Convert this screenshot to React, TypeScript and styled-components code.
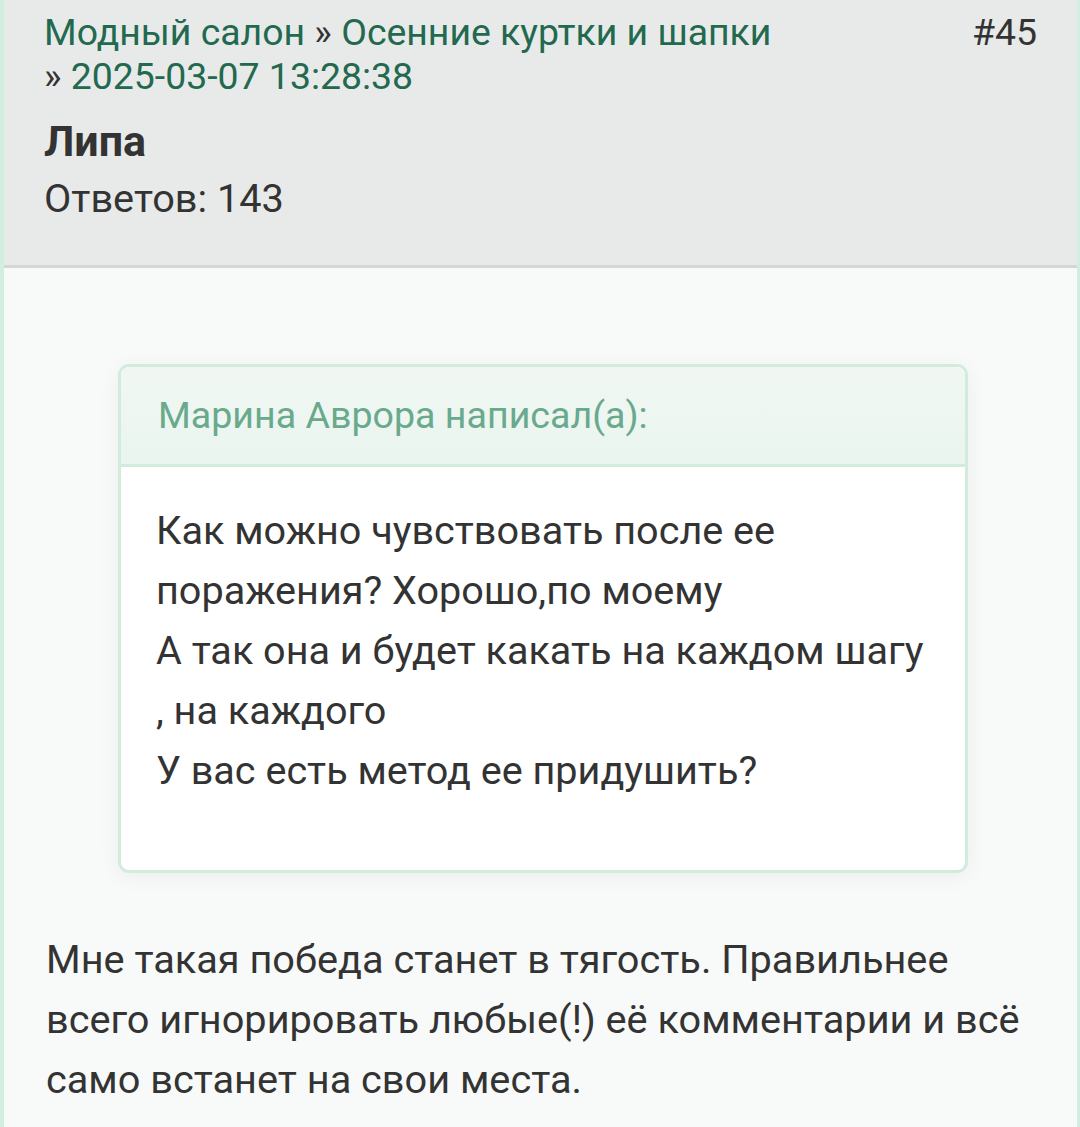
import React from "react";
import styled, { createGlobalStyle } from "styled-components";

const Global = createGlobalStyle`
  html, body { margin: 0; padding: 0; background: #f8faf9; }
  body { font-family: Roboto, "Noto Sans", "Liberation Sans", sans-serif; color: #333; }
`;

const Post = styled.article`
  border-left: 4px solid #d3eee0;
  border-right: 3px solid #d3eee0;
  background: #f8faf9;
  min-height: 1127px;
  box-sizing: border-box;
`;

const Header = styled.header`
  background: #e8eae9;
  border-bottom: 3px solid #d5d7d6;
  padding: 10px 40px 42px 40px;
  display: flex;
  flex-direction: column;
`;

const TopRow = styled.div`
  display: flex;
  justify-content: space-between;
  align-items: flex-start;
  gap: 40px;
`;

const Crumbs = styled.div`
  font-size: 37.4px;
  line-height: 44px;
  color: #333;
  max-width: 880px;
`;

const Crumb = styled.a`
  color: #22694f;
  text-decoration: none;
  white-space: nowrap;
`;

const PostNo = styled.span`
  font-size: 37.4px;
  line-height: 44px;
  color: #333;
`;

const Author = styled.div`
  margin-top: 17px;
  font-size: 43px;
  line-height: 52px;
  font-weight: 700;
  color: #333;
`;

const Replies = styled.div`
  margin-top: 8px;
  font-size: 39.7px;
  line-height: 48px;
  color: #333;
`;

const Body = styled.div`
  padding: 96px 42px 0 42px;
`;

const Quote = styled.blockquote`
  margin: 0 67px 0 72px;
  border: 3px solid #d3ebdd;
  border-radius: 11px;
  background: #fff;
  box-shadow: 0 4px 22px rgba(0, 0, 0, 0.05);
  overflow: hidden;
`;

const QuoteHead = styled.div`
  height: 97px;
  display: flex;
  align-items: center;
  padding: 0 37px;
  background: linear-gradient(#f0f7f3, #eaf5ef);
  border-bottom: 3px solid #d3ebdd;
  font-size: 37.6px;
  line-height: 1.2;
  color: #69a98c;
`;

const QuoteText = styled.div`
  padding: 34px 35px 69px 35px;
  font-size: 39.6px;
  line-height: 60px;
  color: #333;
`;

const Line = styled.div`
  white-space: nowrap;
`;

const Message = styled.div`
  margin-top: 57px;
  font-size: 39.7px;
  line-height: 60px;
  color: #333;
`;

export default function App() {
  return (
    <>
      <Global />
      <Post>
        <Header>
          <TopRow>
            <Crumbs>
              <Crumb href="#">Модный салон</Crumb> » <Crumb href="#">Осенние куртки и шапки</Crumb>{" "}
              »{"\u00A0"}
              <Crumb href="#">2025-03-07 13:28:38</Crumb>
            </Crumbs>
            <PostNo>#45</PostNo>
          </TopRow>
          <Author>Липа</Author>
          <Replies>Ответов: 143</Replies>
        </Header>
        <Body>
          <Quote>
            <QuoteHead>Марина Аврора написал(а):</QuoteHead>
            <QuoteText>
              <Line>Как можно чувствовать после ее</Line>
              <Line>поражения? Хорошо,по моему</Line>
              <Line>А так она и будет какать на каждом шагу</Line>
              <Line>, на каждого</Line>
              <Line>У вас есть метод ее придушить?</Line>
            </QuoteText>
          </Quote>
          <Message>
            <Line>Мне такая победа станет в тягость. Правильнее</Line>
            <Line>всего игнорировать любые(!) её комментарии и всё</Line>
            <Line>само встанет на свои места.</Line>
          </Message>
        </Body>
      </Post>
    </>
  );
}
